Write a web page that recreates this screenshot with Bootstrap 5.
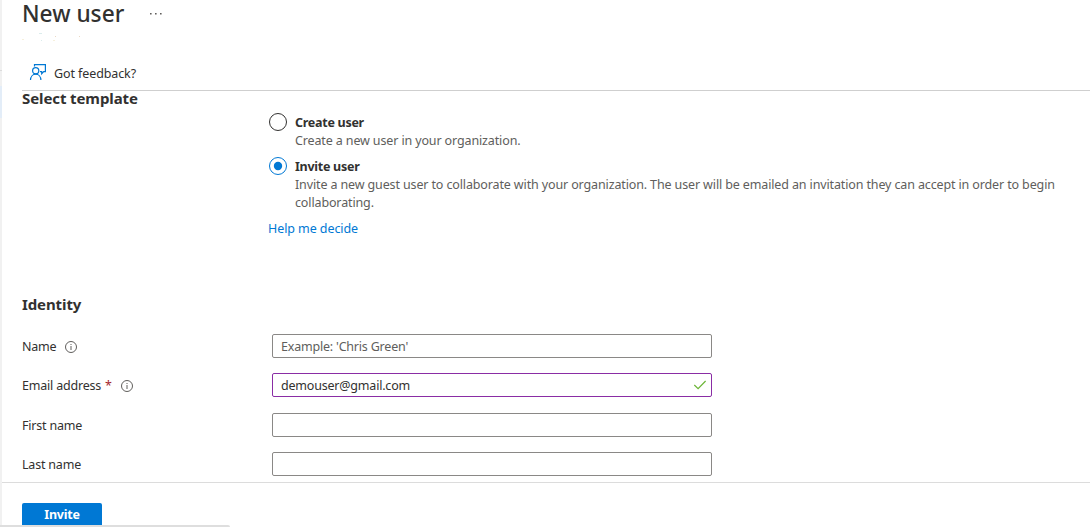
<!DOCTYPE html>
<html lang="en">
<head>
<meta charset="utf-8">
<meta name="viewport" content="width=device-width, initial-scale=1">
<title>New user</title>
<link href="https://cdn.jsdelivr.net/npm/bootstrap@5.3.0/dist/css/bootstrap.min.css" rel="stylesheet">
<script src="https://cdn.jsdelivr.net/npm/bootstrap@5.3.0/dist/js/bootstrap.bundle.min.js" defer></script>
<style>
body{font-family:"Noto Sans","Open Sans",sans-serif;font-size:12.5px;line-height:18px;color:#323130;height:527px;overflow:hidden;letter-spacing:-.16px}
.edge{width:2px;background:#f1f1f1}
.edge-line{height:1px;margin-top:70px;background:#dcdcdc}
.edge-active{height:32px;margin-top:15px;background:#e3edf8}
.blade{padding-left:20px}
.title-bar{height:56px}
.blade-title{font-size:22.7px;line-height:28px;font-weight:500;letter-spacing:0}
.more{margin-left:25px}
.specks{height:28px}
.toolbar{height:35px;padding-left:7px;border-bottom:1px solid #cfcfcf}
.toolbar svg{margin-bottom:2px}
.feedback{margin-left:7px;padding-top:1px;letter-spacing:-.1px}
.section-title{font-size:15px;line-height:16px;font-weight:700;letter-spacing:-.1px}
.template-title{line-height:14px;padding-bottom:1px}
.identity-title{padding-bottom:22px}
.template-list{padding-left:246px;height:190px}
.choice{padding-left:1px}
.choice-body{padding-left:8px}
.fw-bold{letter-spacing:-.27px}
.hint{color:#605e5c;letter-spacing:-.13px}
.radio{width:18px;height:18px;margin-top:-1px}
.link-azure{color:#0078d4;letter-spacing:-.08px}
.field-label{width:250px;padding-top:2px;letter-spacing:-.2px}
.info{margin-left:9px}
.form-control.text-box{width:440px;height:24px;padding:0 8px;font-size:12.5px;line-height:20px;letter-spacing:-.2px;color:#323130;border:1px solid #8a8886;border-radius:2px;box-shadow:none}
.text-box::placeholder{color:#605e5c;opacity:1}
.form-control.text-box.edited{border-color:#8a2da5}
.tick{right:5px;top:5px}
.required{color:#a4262c}
.footer-bar{border-top:1px solid #dcdcdc;height:45px;padding:20px 0 0 20px}
.btn.btn-azure{width:80px;height:24px;padding:0;font-size:12.5px;line-height:22px;font-weight:700;background:#0078d4;color:#fff;border:0;border-radius:2px 2px 0 0;letter-spacing:-.25px}
.status-strip{width:230px;height:2px;background:#dedede;border-top-right-radius:2px}
</style>
</head>
<body class="d-flex bg-white position-relative">
<div class="edge flex-shrink-0 h-100"><div class="edge-line"></div><div class="edge-active"></div></div>
<main class="flex-grow-1 d-flex flex-column">
  <div class="blade flex-grow-1">
    <header class="title-bar">
      <div class="d-flex align-items-center">
        <h1 class="blade-title m-0">New user</h1>
        <svg class="more" width="14" height="4" viewBox="0 0 14 4" fill="#605e5c"><path d="M1 1h1.6v1.6H1zM6 1h1.6v1.6H6zM11 1h1.6v1.6H11z"/></svg>
      </div>
      <svg class="specks d-block" width="80" height="28"><path fill="#f6f0dd" d="M0 11h2v1H0zM31 12h2v1h-2z"/><path fill="#dbecec" d="M17 5h3v1h-3zM19 12h1v1h-1z"/><path fill="#ead9c5" d="M33 8h1v1h-1zM57 8h1v1h-1z"/></svg>
    </header>
    <div class="toolbar d-flex align-items-center">
      <svg width="18" height="18" viewBox="0 0 18 18" fill="none" stroke="#0078d4" stroke-width="1.2"><path d="M5.5 3.4V1.6H16.4V8.6H14.7L12.7 10.7V8.6H11"/><circle cx="6.7" cy="7.8" r="3.1"/><path d="M1.5 17C1.6 13.6 3.9 11.2 6.7 11.2S11.8 13.6 11.9 17"/></svg>
      <span class="feedback">Got feedback?</span>
    </div>
    <section>
      <h2 class="section-title template-title m-0">Select template</h2>
      <div class="template-list">
        <div class="choice d-flex pt-2">
          <svg class="radio flex-shrink-0" viewBox="0 0 18 18" fill="none"><circle cx="9" cy="9" r="8.5" stroke="#323130"/></svg>
          <div class="choice-body"><div class="fw-bold">Create user</div><div class="hint">Create a new user in your organization.</div></div>
        </div>
        <div class="choice d-flex pt-2">
          <svg class="radio flex-shrink-0" viewBox="0 0 18 18" fill="none"><circle cx="9" cy="9" r="8.5" stroke="#0078d4"/><circle cx="9" cy="9" r="4.2" fill="#0078d4"/></svg>
          <div class="choice-body"><div class="fw-bold">Invite user</div><div class="hint">Invite a new guest user to collaborate with your organization. The user will be emailed an invitation they can accept in order to begin<br>collaborating.</div></div>
        </div>
        <div class="pt-2"><a class="link-azure text-decoration-none" href="#">Help me decide</a></div>
      </div>
    </section>
    <section>
      <h2 class="section-title identity-title m-0">Identity</h2>
      <div class="d-grid" style="row-gap:15.4px">
        <div class="d-flex align-items-center">
          <label class="field-label d-flex align-items-center" for="name">Name
            <svg class="info" width="12" height="12" viewBox="0 0 12 12" fill="none" stroke="#605e5c"><circle cx="6" cy="6" r="5.5"/><path d="M6 5v4M6 3v1"/></svg></label>
          <input id="name" class="form-control text-box" placeholder="Example: 'Chris Green'">
        </div>
        <div class="d-flex align-items-center">
          <label class="field-label d-flex align-items-center" for="email">Email address<span class="required ms-1">*</span>
            <svg class="info" width="12" height="12" viewBox="0 0 12 12" fill="none" stroke="#605e5c"><circle cx="6" cy="6" r="5.5"/><path d="M6 5v4M6 3v1"/></svg></label>
          <div class="position-relative"><input id="email" class="form-control text-box edited" value="demouser@gmail.com">
            <svg class="tick position-absolute" width="14" height="14" viewBox="0 0 14 14" fill="none" stroke="#6bb536" stroke-width="1.2"><path d="M1.3 7l3.8 3.6L12.6 3"/></svg></div>
        </div>
        <div class="d-flex align-items-center"><label class="field-label" for="first">First name</label><input id="first" class="form-control text-box"></div>
        <div class="d-flex align-items-center"><label class="field-label" for="last">Last name</label><input id="last" class="form-control text-box"></div>
      </div>
    </section>
  </div>
  <footer class="footer-bar flex-shrink-0"><button class="btn btn-azure d-block" type="button">Invite</button></footer>
</main>
<div class="status-strip position-absolute bottom-0 start-0"></div>
</body>
</html>
